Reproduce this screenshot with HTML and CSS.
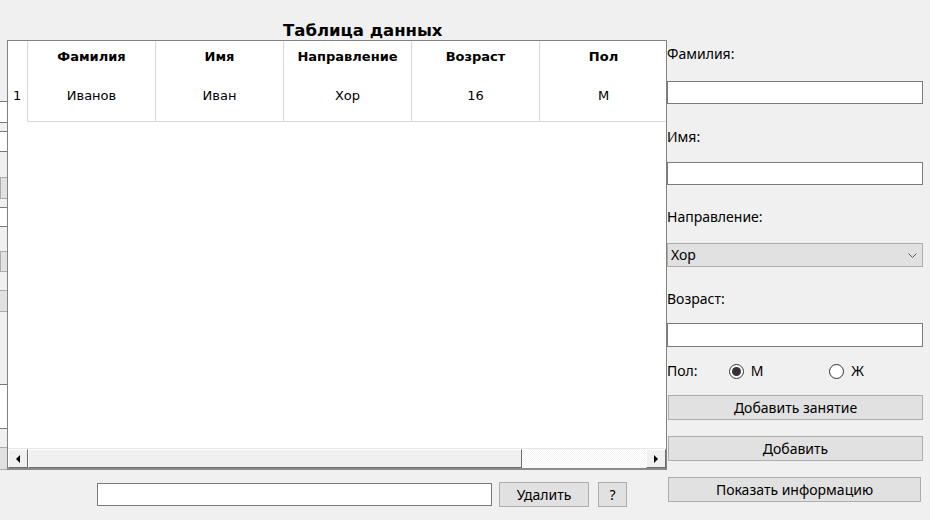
FILE: index.html
```html
<!DOCTYPE html>
<html lang="ru">
<head>
<meta charset="utf-8">
<title>Таблица данных</title>
<link rel="stylesheet" href="styles.css">
</head>
<body>
<div class="app">
  <div class="left">
    <div class="title-row"><h1 class="title">Таблица данных</h1></div>
    <div class="mid">
      <div class="strip">
        <div class="sl box h24"></div>
        <div class="gap g9"></div>
        <div class="sl box h23"></div>
        <div class="gap g10"></div>
        <div class="sl combo h23"></div>
        <div class="gap g9"></div>
        <div class="sl box h23"></div>
        <div class="gap g8"></div>
        <div class="sl combo h23"></div>
        <div class="gap g19"></div>
        <div class="sl btn h25"></div>
        <div class="gap g80"></div>
        <div class="sl box h50"></div>
        <div class="gap g20"></div>
        <div class="sl btn h25"></div>
      </div>
      <div class="table">
        <div class="grid">
          <div class="row head">
            <div class="rh"></div>
            <div class="cell">Фамилия</div>
            <div class="cell">Имя</div>
            <div class="cell">Направление</div>
            <div class="cell">Возраст</div>
            <div class="cell">Пол</div>
          </div>
          <div class="row data">
            <div class="rh">1</div>
            <div class="cell">Иванов</div>
            <div class="cell">Иван</div>
            <div class="cell">Хор</div>
            <div class="cell">16</div>
            <div class="cell">М</div>
          </div>
        </div>
        <div class="hscroll">
          <div class="sbtn"><span class="arr-left"></span></div>
          <div class="thumb"></div>
          <div class="track"></div>
          <div class="sbtn"><span class="arr-right"></span></div>
        </div>
      </div>
    </div>
    <div class="bottom">
      <input class="field search" type="text">
      <button class="button del">Удалить</button>
      <button class="button help">?</button>
    </div>
  </div>
  <div class="form">
    <div class="label l1">Фамилия:</div>
    <input class="field f1" type="text">
    <div class="label l2">Имя:</div>
    <input class="field f2" type="text">
    <div class="label l3">Направление:</div>
    <div class="combo">
      <span>Хор</span>
      <svg class="chev" width="9" height="5" viewBox="0 0 9 5"><path d="M0.5 0.5 L4.5 4.5 L8.5 0.5" fill="none" stroke="#5a5a5a" stroke-width="1"/></svg>
    </div>
    <div class="label l4">Возраст:</div>
    <input class="field f4" type="text">
    <div class="radios">
      <span class="rlabel">Пол:</span>
      <span class="radio on"></span><span class="rtext">М</span>
      <span class="radio r2"></span><span class="rtext">Ж</span>
    </div>
    <button class="button wide b1">Добавить занятие</button>
    <button class="button wide b2">Добавить</button>
    <button class="button wide b3">Показать информацию</button>
  </div>
</div>
</body>
</html>
```

FILE: styles.css
```css
* { box-sizing: border-box; }
html, body { margin: 0; padding: 0; }
body {
  width: 930px;
  height: 520px;
  background: #f0f0f0;
  font-family: "Noto Sans", "Open Sans", sans-serif;
  font-size: 14px;
  color: #000;
  overflow: hidden;
}
.app { display: flex; height: 520px; }
.left { width: 667px; display: flex; flex-direction: column; }
.title-row { height: 40px; padding-left: 283px; }
.title {
  margin: 0;
  padding-top: 21px;
  font-family: "DejaVu Sans", sans-serif;
  font-weight: bold;
  font-size: 16.5px;
  line-height: 20px;
  white-space: nowrap;
}
.mid { display: flex; height: 430px; }
.strip { width: 7px; padding-top: 61px; display: flex; flex-direction: column; }
.sl { border-top: 1px solid #7a7a7a; border-bottom: 1px solid #7a7a7a; }
.sl.box { background: #fff; }
.sl.combo, .sl.btn { background: #e1e1e1; border-color: #adadad; }
.h23 { height: 23px; } .h24 { height: 24px; } .h25 { height: 25px; } .h50 { height: 50px; }
.g8 { height: 8px; } .g9 { height: 9px; } .g10 { height: 10px; } .g19 { height: 19px; } .g20 { height: 20px; } .g80 { height: 80px; }

.table {
  width: 660px;
  height: 430px;
  border: 1px solid #828282;
  border-bottom: 2px solid #8a8a8a;
  background: #fff;
  display: flex;
  flex-direction: column;
  overflow: hidden;
}
.grid { flex: 1; }
.row { display: flex; }
.rh { width: 19px; flex: none; padding-left: 5px; font-family: "DejaVu Sans", sans-serif; font-size: 13px; }
.cell {
  width: 128px;
  flex: none;
  border-left: 1px solid #d9d9d9;
  text-align: center;
  font-family: "DejaVu Sans", sans-serif;
  font-size: 13px;
}
.head { height: 28px; }
.head .cell { font-weight: bold; font-size: 13px; line-height: 28px; padding-top: 2px; }
.data { height: 53px; border-bottom: 1px solid #d9d9d9; }
.data .cell, .data .rh { line-height: 52px; padding-top: 1px; }
.row.data .rh { background: #fff; margin-bottom: -1px; }

.hscroll {
  height: 20px;
  border-top: 1px solid #e6e6e6;
  display: flex;
  background: #f0f0f0;
}
.sbtn {
  width: 20px;
  flex: none;
  background: #f0f0f0;
  border-top: 1px solid #fff;
  border-left: 1px solid #fff;
  border-right: 1px solid #6d6d6d;
  border-bottom: 1px solid #6d6d6d;
  display: flex;
  align-items: center;
  justify-content: center;
}
.arr-left { width: 0; height: 0; border-top: 4px solid transparent; border-bottom: 4px solid transparent; border-right: 4px solid #000; }
.arr-right { width: 0; height: 0; border-top: 4px solid transparent; border-bottom: 4px solid transparent; border-left: 4px solid #000; }
.thumb {
  width: 494px;
  flex: none;
  background: #f0f0f0;
  border-top: 1px solid #fff;
  border-left: 1px solid #fff;
  border-right: 1px solid #6d6d6d;
  border-bottom: 1px solid #6d6d6d;
}
.track {
  flex: 1;
  background-color: #fff;
  background-image: repeating-conic-gradient(#f4f4f4 0 25%, #ffffff 0 50%);
  background-size: 2px 2px;
}

.bottom { display: flex; align-items: flex-start; padding-top: 12px; padding-left: 97px; }
.field {
  display: block;
  margin: 0;
  padding: 0;
  height: 23px;
  border: 1px solid #7a7a7a;
  background: #fff;
  font: inherit;
}
.search { width: 395px; margin-top: 1px; }
.button {
  margin: 0;
  padding: 0;
  height: 25px;
  background: #e1e1e1;
  border: 1px solid #adadad;
  font-family: "Noto Sans", "Open Sans", sans-serif;
  font-size: 14px;
  line-height: 22px;
  color: #000;
}
.del { width: 90px; margin-left: 7px; }
.help { width: 29px; margin-left: 9px; }

.form { width: 263px; display: flex; flex-direction: column; padding-top: 44px; }
.label { height: 20px; line-height: 20px; white-space: nowrap; }
.f1, .f2, .f4 { width: 256px; }
.f1 { margin-top: 17px; }
.l2 { margin-top: 23px; }
.f2 { margin-top: 15px; }
.l3 { margin-top: 22px; }
.combo {
  margin-top: 16px;
  width: 256px;
  height: 24px;
  background: #e1e1e1;
  border: 1px solid #adadad;
  display: flex;
  align-items: center;
  justify-content: space-between;
  padding: 0 5px 0 3px;
  line-height: 22px;
}
.chev { display: block; margin-top: 1px; }
.l4 { margin-top: 22px; }
.f4 { margin-top: 14px; height: 24px; }
.radios { margin-top: 14px; height: 20px; display: flex; align-items: center; line-height: 20px; }
.rlabel { width: 62px; }
.radio {
  width: 15px;
  height: 15px;
  flex: none;
  border: 1px solid #333;
  border-radius: 50%;
  background: #fff;
  display: flex;
  align-items: center;
  justify-content: center;
}
.radio.on::after { content: ""; width: 9px; height: 9px; border-radius: 50%; background: #333; }
.rtext { margin-left: 7px; width: 79px; }
.wide { width: 255px; margin-left: 1px; }
.b1 { margin-top: 14px; }
.b2 { margin-top: 16px; }
.b3 { margin-top: 16px; width: 253px; }
```
